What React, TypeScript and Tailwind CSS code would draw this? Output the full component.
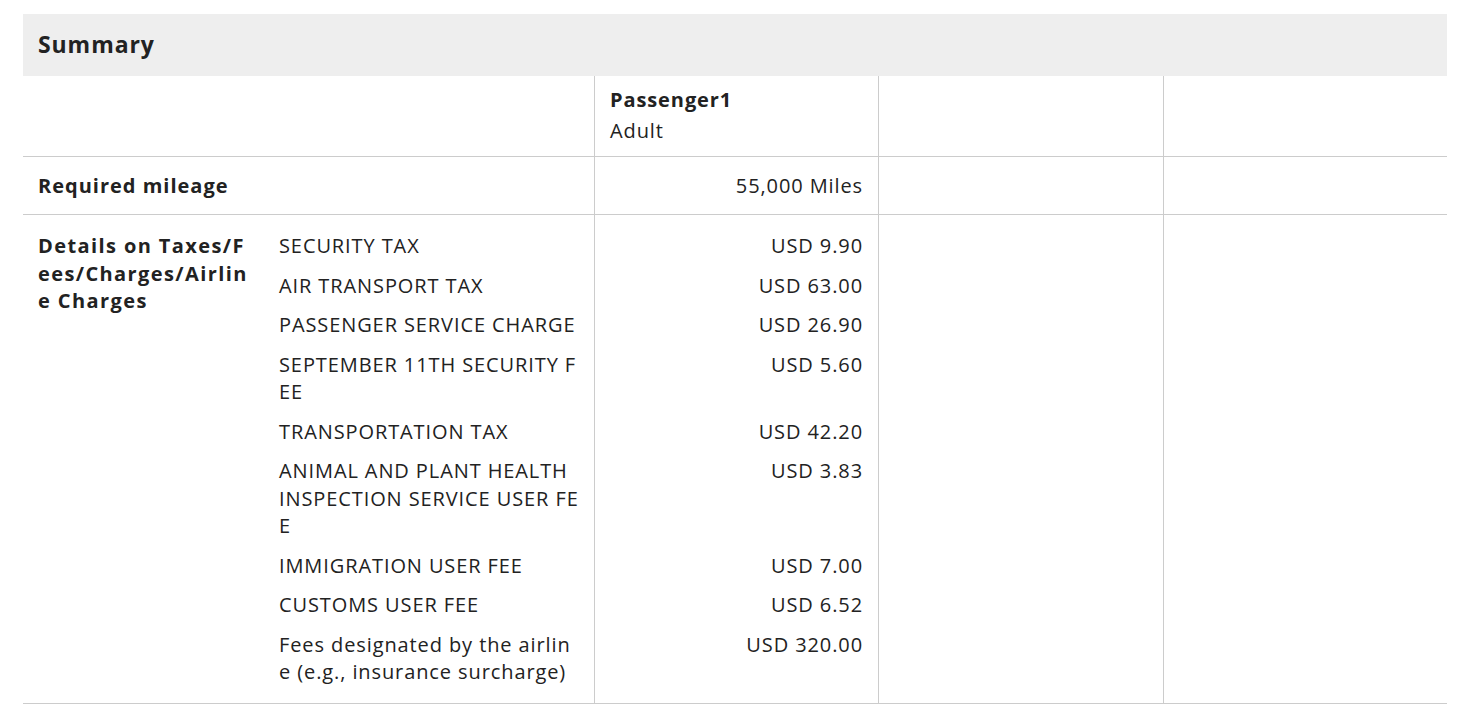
import React from "react";

const items: { lines: string[]; amount: string }[] = [
  { lines: ["SECURITY TAX"], amount: "USD 9.90" },
  { lines: ["AIR TRANSPORT TAX"], amount: "USD 63.00" },
  { lines: ["PASSENGER SERVICE CHARGE"], amount: "USD 26.90" },
  { lines: ["SEPTEMBER 11TH SECURITY F", "EE"], amount: "USD 5.60" },
  { lines: ["TRANSPORTATION TAX"], amount: "USD 42.20" },
  { lines: ["ANIMAL AND PLANT HEALTH", "INSPECTION SERVICE USER FE", "E"], amount: "USD 3.83" },
  { lines: ["IMMIGRATION USER FEE"], amount: "USD 7.00" },
  { lines: ["CUSTOMS USER FEE"], amount: "USD 6.52" },
  { lines: ["Fees designated by the airlin", "e (e.g., insurance surcharge)"], amount: "USD 320.00" },
];

export default function App() {
  const n = items.length;
  return (
    <div
      className="min-h-screen bg-white pt-[14px] text-[#222] text-[20px] leading-[27.5px] tracking-[0.045em]"
      style={{ fontFamily: '"Open Sans", "Noto Sans", sans-serif' }}
    >
      <div className="ml-[23px] w-[1424px]">
        <div className="h-[62px] bg-[#eeeeee] flex items-center px-[15px]">
          <h2 className="text-[23px] font-bold tracking-[0.04em]">Summary</h2>
        </div>

        {/* Row 1 */}
        <div className="grid grid-cols-[571px_284px_285px_284px] border-b border-[#cccccc]">
          <div />
          <div className="border-l border-[#cccccc] pl-[15px] pt-[10px] pb-[11px]">
            <div className="font-bold tracking-[0.045em] leading-[28px]">Passenger1</div>
            <div className="mt-[3px] leading-[28px]">Adult</div>
          </div>
          <div className="border-l border-[#cccccc]" />
          <div className="border-l border-[#cccccc]" />
        </div>

        {/* Row 2 */}
        <div className="grid grid-cols-[571px_284px_285px_284px] border-b border-[#cccccc]">
          <div className="pl-[15px] pt-[15px] pb-[14px] font-bold tracking-[0.05em] leading-[28px]">
            Required mileage
          </div>
          <div className="border-l border-[#cccccc] pr-[15px] pt-[15px] pb-[14px] text-right leading-[28px]">
            55,000 Miles
          </div>
          <div className="border-l border-[#cccccc]" />
          <div className="border-l border-[#cccccc]" />
        </div>

        {/* Row 3 */}
        <div className="grid grid-cols-[240px_331px_284px_285px_284px] border-b border-[#cccccc]">
          <div
            className="col-start-1 pl-[15px] pr-[6px] pt-[17px] font-bold tracking-[0.07em] whitespace-nowrap"
            style={{ gridRow: `1 / span ${n}` }}
          >
            <div>Details on Taxes/F</div>
            <div>ees/Charges/Airlin</div>
            <div>e Charges</div>
          </div>
          {items.map((it, i) => {
            const pad =
              (i === 0 ? "pt-[17px] " : "pt-[6px] ") + (i === n - 1 ? "pb-[17px]" : "pb-[6px]");
            return (
              <React.Fragment key={i}>
                <div
                  className={"col-start-2 pl-[16px] pr-[10px] whitespace-nowrap " + pad}
                  style={{ gridRow: i + 1 }}
                >
                  {it.lines.map((l, j) => (
                    <div key={j}>{l}</div>
                  ))}
                </div>
                <div
                  className={"col-start-3 border-l border-[#cccccc] pr-[15px] text-right " + pad}
                  style={{ gridRow: i + 1 }}
                >
                  {it.amount}
                </div>
              </React.Fragment>
            );
          })}
          <div className="col-start-4 border-l border-[#cccccc]" style={{ gridRow: `1 / span ${n}` }} />
          <div className="col-start-5 border-l border-[#cccccc]" style={{ gridRow: `1 / span ${n}` }} />
        </div>
      </div>
    </div>
  );
}
